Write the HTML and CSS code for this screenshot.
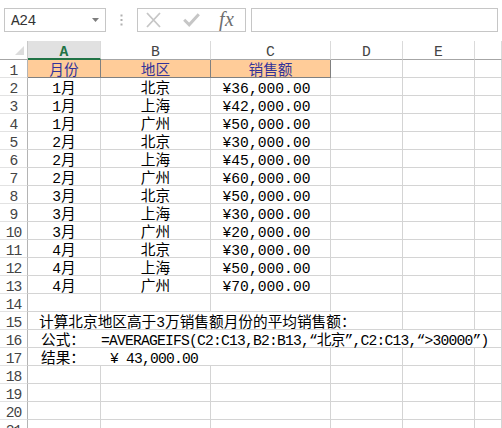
FILE: index.html
```html
<!DOCTYPE html>
<html lang="zh">
<head>
<meta charset="utf-8">
<title>AVERAGEIFS</title>
<link rel="stylesheet" href="styles.css">
</head>
<body>
<div class="fbar">
  <div class="namebox"><span>A24</span><svg class="dd" width="7" height="4" viewBox="0 0 7 4"><path d="M0 0H7L3.5 4Z" fill="#7d7d7d"/></svg></div>
  <div class="sep"><svg width="3" height="12" viewBox="0 0 3 12"><rect x="0.5" y="0.5" width="2" height="2" fill="#b0b0b0"/><rect x="0.5" y="5" width="2" height="2" fill="#b0b0b0"/><rect x="0.5" y="9.5" width="2" height="2" fill="#b0b0b0"/></svg></div>
  <div class="fxbox">
    <svg class="ix" width="15" height="16" viewBox="0 0 15 16"><path d="M1 1L14 15M14 1L1 15" stroke="#c6c6c6" stroke-width="1.8" fill="none"/></svg>
    <svg class="ic" width="17" height="14" viewBox="0 0 17 14"><path d="M1.2 6.8L6.2 11.8L15.8 1.2" stroke="#c6c6c6" stroke-width="3" fill="none"/></svg>
    <span class="fx">fx</span>
  </div>
  <div class="finput"></div>
</div>
<div class="sheet">
  <div class="corner"><div class="tri"></div></div><div class="h sel">A</div><div class="h">B</div><div class="h">C</div><div class="h">D</div><div class="h">E</div><div class="h"></div>

  <div class="rh">1</div><div class="c hd">月份</div><div class="c hd">地区</div><div class="c hd">销售额</div><div class="c"></div><div class="c"></div><div class="c"></div>
  <div class="rh">2</div><div class="c ctr">1月</div><div class="c ctr">北京</div><div class="c ctr num">¥36,000.00</div><div class="c"></div><div class="c"></div><div class="c"></div>
  <div class="rh">3</div><div class="c ctr">1月</div><div class="c ctr">上海</div><div class="c ctr num">¥42,000.00</div><div class="c"></div><div class="c"></div><div class="c"></div>
  <div class="rh">4</div><div class="c ctr">1月</div><div class="c ctr">广州</div><div class="c ctr num">¥50,000.00</div><div class="c"></div><div class="c"></div><div class="c"></div>
  <div class="rh">5</div><div class="c ctr">2月</div><div class="c ctr">北京</div><div class="c ctr num">¥30,000.00</div><div class="c"></div><div class="c"></div><div class="c"></div>
  <div class="rh">6</div><div class="c ctr">2月</div><div class="c ctr">上海</div><div class="c ctr num">¥45,000.00</div><div class="c"></div><div class="c"></div><div class="c"></div>
  <div class="rh">7</div><div class="c ctr">2月</div><div class="c ctr">广州</div><div class="c ctr num">¥60,000.00</div><div class="c"></div><div class="c"></div><div class="c"></div>
  <div class="rh">8</div><div class="c ctr">3月</div><div class="c ctr">北京</div><div class="c ctr num">¥50,000.00</div><div class="c"></div><div class="c"></div><div class="c"></div>
  <div class="rh">9</div><div class="c ctr">3月</div><div class="c ctr">上海</div><div class="c ctr num">¥30,000.00</div><div class="c"></div><div class="c"></div><div class="c"></div>
  <div class="rh">10</div><div class="c ctr">3月</div><div class="c ctr">广州</div><div class="c ctr num">¥20,000.00</div><div class="c"></div><div class="c"></div><div class="c"></div>
  <div class="rh">11</div><div class="c ctr">4月</div><div class="c ctr">北京</div><div class="c ctr num">¥30,000.00</div><div class="c"></div><div class="c"></div><div class="c"></div>
  <div class="rh">12</div><div class="c ctr">4月</div><div class="c ctr">上海</div><div class="c ctr num">¥50,000.00</div><div class="c"></div><div class="c"></div><div class="c"></div>
  <div class="rh">13</div><div class="c ctr">4月</div><div class="c ctr">广州</div><div class="c ctr num">¥70,000.00</div><div class="c"></div><div class="c"></div><div class="c"></div>
  <div class="rh">14</div><div class="c"></div><div class="c"></div><div class="c"></div><div class="c"></div><div class="c"></div><div class="c"></div>
  <div class="rh">15</div><div class="c s4 note">计算北京地区高于3万销售额月份的平均销售额：</div><div class="c"></div><div class="c"></div>
  <div class="rh">16</div><div class="c s6 line"><span class="lbl lbl16">公式：</span><span class="tight">=AVERAGEIFS(C2:C13,B2:B13,“北京”,C2:C13,“&gt;30000”)</span></div>
  <div class="rh">17</div><div class="c s3 line"><span class="lbl lbl17">结果：</span><span class="tight">¥ 43,000.00</span></div><div class="c"></div><div class="c"></div><div class="c"></div>
  <div class="rh">18</div><div class="c"></div><div class="c"></div><div class="c"></div><div class="c"></div><div class="c"></div><div class="c"></div>
  <div class="rh">19</div><div class="c"></div><div class="c"></div><div class="c"></div><div class="c"></div><div class="c"></div><div class="c"></div>
  <div class="rh">20</div><div class="c"></div><div class="c"></div><div class="c"></div><div class="c"></div><div class="c"></div><div class="c"></div>
  <div class="rh">21</div><div class="c"></div><div class="c"></div><div class="c"></div><div class="c"></div><div class="c"></div><div class="c"></div>
</div>
</body>
</html>
```

FILE: styles.css
```css
* { box-sizing: border-box; }
html, body { margin: 0; padding: 0; }
body {
  width: 502px;
  height: 428px;
  overflow: hidden;
  background: #ffffff;
  font-family: "Liberation Mono", "Noto Sans CJK SC", monospace;
  font-size: 14.67px;
  color: #000;
}
.fbar {
  height: 41px;
  display: flex;
  align-items: flex-start;
  padding: 8px 4px 0 4px;
}
.namebox {
  width: 102px;
  height: 24px;
  border: 1px solid #c6c6c6;
  display: flex;
  align-items: center;
  justify-content: space-between;
  padding: 1px 6px 0 6px;
  color: #333;
  letter-spacing: -0.5px;
}
.dd { margin-top: -1px; }
.sep {
  width: 31px;
  height: 24px;
  display: flex;
  align-items: center;
  justify-content: center;
}
.fxbox {
  width: 109px;
  height: 24px;
  border: 1px solid #c6c6c6;
  display: flex;
  align-items: center;
  padding-left: 8px;
}
.ic { margin-left: 22px; }
.fx {
  margin-left: 19px;
  font-family: "Liberation Serif", serif;
  font-style: italic;
  font-size: 20px;
  line-height: 20px;
  letter-spacing: 0.5px;
  color: #6e6e6e;
  margin-top: -2px;
}
.finput {
  flex: 1;
  height: 24px;
  border: 1px solid #c6c6c6;
  margin-left: 5px;
}
.sheet {
  display: grid;
  grid-template-columns: 28px 73px 110px 120px 72px 72px 1fr;
  grid-template-rows: 19px;
  grid-auto-rows: 18px;
}
.sheet > div {
  white-space: nowrap;
  line-height: 17px;
  padding-top: 3px;
}
.corner {
  border-right: 1px solid #c8c8c8;
  border-bottom: 1px solid #a6a6a6;
  display: flex;
  align-items: flex-end;
  justify-content: flex-end;
  padding: 0 3px 4px 0;
}
.sheet > .corner { padding-top: 0; }
.tri {
  width: 0;
  height: 0;
  border-left: 9px solid transparent;
  border-bottom: 9px solid #dcdcdc;
}
.h {
  border-right: 1px solid #dadada;
  border-bottom: 1px solid #a6a6a6;
  text-align: center;
  color: #444;
}
.h.sel {
  background: #e1e1e1;
  border-bottom: 2px solid #217346;
  color: #217346;
  font-weight: bold;
}
.rh {
  border-right: 1px solid #b4b4b4;
  border-bottom: 1px solid #e2e2e2;
  text-align: center;
  color: #444;
  letter-spacing: -1px;
}
.c {
  border-right: 1px solid #d4d4d4;
  border-bottom: 1px solid #d4d4d4;
}
.ctr { text-align: center; }
.num { padding-right: 8px; }
.hd {
  background: #ffcc99;
  color: #333399;
  text-align: center;
  border-right-color: #808080;
  border-bottom-color: #808080;
}
.s3 { grid-column: span 3; }
.s4 { grid-column: span 4; }
.s6 { grid-column: span 6; }
.note { padding-left: 11px; }
.line { padding-left: 13px; }
.lbl { display: inline-block; }
.lbl16 { width: 60px; }
.lbl17 { width: 69px; }
.tight { letter-spacing: -0.8px; }
```
